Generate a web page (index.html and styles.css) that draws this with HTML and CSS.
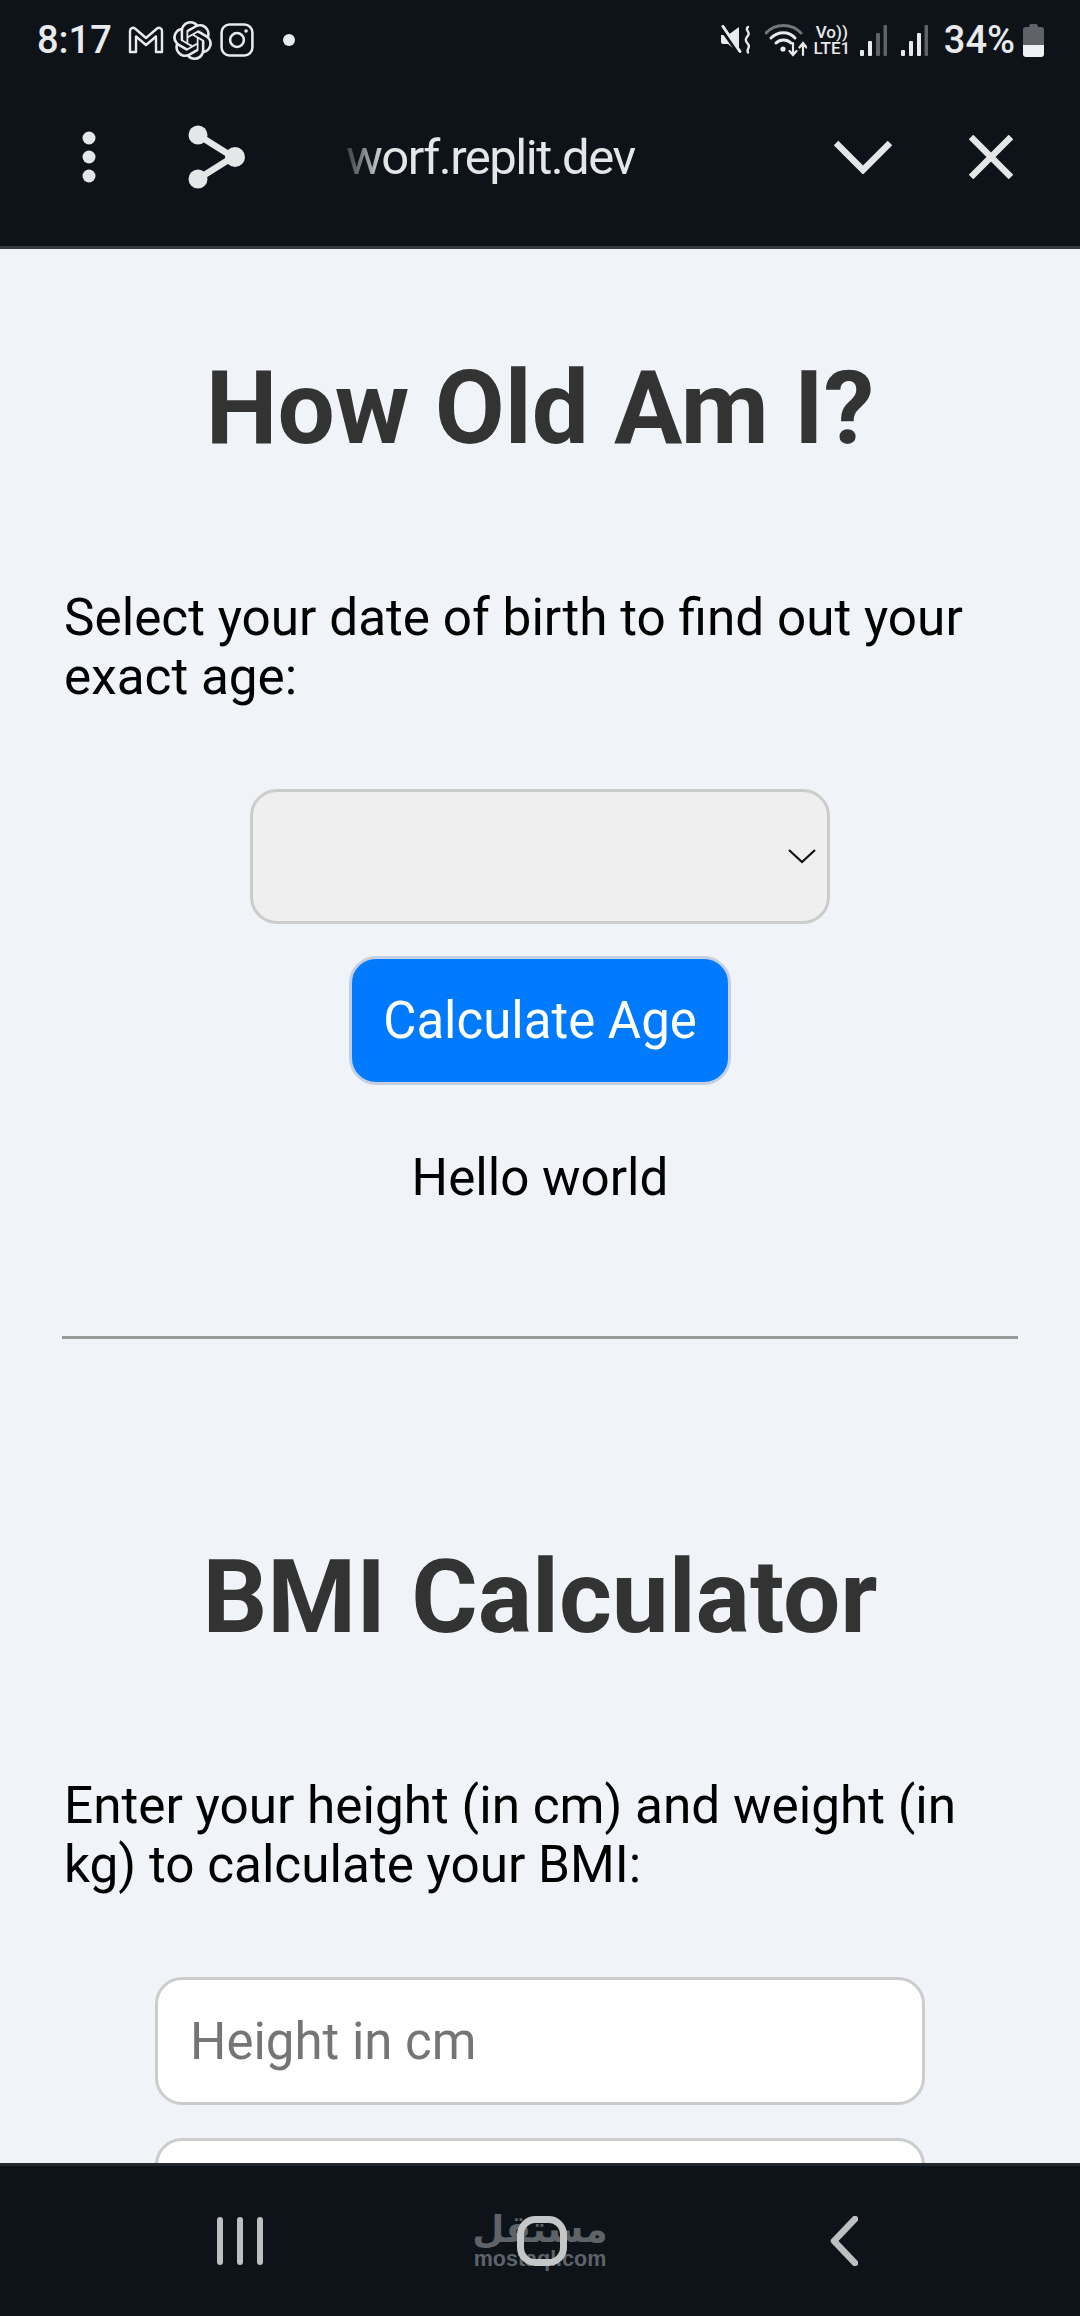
FILE: index.html
```html
<!DOCTYPE html>
<html lang="en">
<head>
    <meta charset="UTF-8">
    <meta name="viewport" content="width=device-width, initial-scale=1.0">
    <title>How Old Am I?</title>
    <link rel="stylesheet" href="styles.css">
</head>
<body>
    <header class="top">
        <div class="status-bar">
            <div class="status-left">
                <span class="clock">8:17</span>
                <svg class="ic-gmail" width="36" height="28" viewBox="0 0 36 28" fill="none" stroke="#e8eaec" stroke-width="2.4" stroke-linejoin="round"><path d="M2 26V5c0-3 3-4 5-2.500L18 12 29 2.500c2-1.500 5-.5 5 2.500v21h-6V10.500L18 19 8 10.500V26z"/></svg>
                <svg class="ic-openai" width="39" height="39" viewBox="0 0 24 24" fill="#e8eaec"><path d="M22.2819 9.8211a5.9847 5.9847 0 0 0-.5157-4.9108 6.0462 6.0462 0 0 0-6.5098-2.9A6.0651 6.0651 0 0 0 4.9807 4.1818a5.9847 5.9847 0 0 0-3.9977 2.9 6.0462 6.0462 0 0 0 .7427 7.0966 5.98 5.98 0 0 0 .511 4.9107 6.051 6.051 0 0 0 6.5146 2.9001A5.9847 5.9847 0 0 0 13.2599 24a6.0557 6.0557 0 0 0 5.7718-4.2058 5.9894 5.9894 0 0 0 3.9977-2.9001 6.0557 6.0557 0 0 0-.7475-7.0729zm-9.022 12.6081a4.4755 4.4755 0 0 1-2.8764-1.0408l.1419-.0804 4.7783-2.7582a.7948.7948 0 0 0 .3927-.6813v-6.7369l2.02 1.1686a.071.071 0 0 1 .038.052v5.5826a4.504 4.504 0 0 1-4.4945 4.4944zm-9.6607-4.1254a4.4708 4.4708 0 0 1-.5346-3.0137l.142.0852 4.783 2.7582a.7712.7712 0 0 0 .7806 0l5.8428-3.3685v2.3324a.0804.0804 0 0 1-.0332.0615L9.74 19.9502a4.4992 4.4992 0 0 1-6.1408-1.6464zM2.3408 7.8956a4.485 4.485 0 0 1 2.3655-1.9728V11.6a.7664.7664 0 0 0 .3879.6765l5.8144 3.3543-2.0201 1.1685a.0757.0757 0 0 1-.071 0l-4.8303-2.7865A4.504 4.504 0 0 1 2.3408 7.872zm16.5963 3.8558L13.1038 8.364 15.1192 7.2a.0757.0757 0 0 1 .071 0l4.8303 2.7913a4.4944 4.4944 0 0 1-.6765 8.1042v-5.6772a.79.79 0 0 0-.407-.667zm2.0107-3.0231l-.142-.0852-4.7735-2.7818a.7759.7759 0 0 0-.7854 0L9.409 9.2297V6.8974a.0662.0662 0 0 1 .0284-.0615l4.8303-2.7866a4.4992 4.4992 0 0 1 6.6802 4.66zM8.3065 12.863l-2.02-1.1638a.0804.0804 0 0 1-.038-.0567V6.0742a4.4992 4.4992 0 0 1 7.3757-3.4537l-.142.0805L8.704 5.459a.7948.7948 0 0 0-.3927.6813zm1.0976-2.3654l2.602-1.4998 2.6069 1.4998v2.9994l-2.5974 1.4997-2.6067-1.4997Z"/></svg>
                <svg class="ic-insta" width="34" height="34" viewBox="0 0 32 32" fill="none" stroke="#e8eaec" stroke-width="2.4"><rect x="1.500" y="1.500" width="29" height="29" rx="7.500"/><circle cx="16" cy="16" r="6.500"/><circle cx="24.500" cy="7.500" r="1.700" fill="#e8eaec" stroke="none"/></svg>
                <span class="notif-dot"></span>
            </div>
            <div class="status-right">
                <svg class="ic-mute" width="30" height="30" viewBox="0 0 30 30" fill="none"><path d="M0 10h7l11-8v26L7 19H2a2 2 0 0 1-2-2z" fill="#e8eaec"/><path d="M1 5l17 24" stroke="#0d1318" stroke-width="3.500"/><path d="M2 1.500l17 25" stroke="#e8eaec" stroke-width="3" stroke-linecap="round"/><path d="M27 2c-4 3 3 5 0 8.500s-3 5 0 8.500-2 5 0 8.500" stroke="#e8eaec" stroke-width="2.400" stroke-linecap="round"/></svg>
                <svg class="ic-wifi" width="42" height="34" viewBox="0 0 42 34" fill="none" stroke-linecap="round"><path d="M1 10C10 0 27 0 36 10" stroke="#73777a" stroke-width="3"/><path d="M6 15c7-7 18-7 24 0" stroke="#e8eaec" stroke-width="3"/><path d="M11 20c4-4 11-4 15 0" stroke="#e8eaec" stroke-width="3"/><circle cx="18" cy="26" r="2.600" fill="#e8eaec"/><path d="M28 20v12m-3.500-4l3.500 4 3.500-4M38 32V21m-3.500 3.500L38 20l3.500 4.500" stroke="#e8eaec" stroke-width="2.200"/></svg>
                <div class="volte"><span>Vo))</span><span>LTE1</span></div>
                <svg class="ic-signal" width="27" height="31" viewBox="0 0 27 31"><rect x="0" y="25" width="4" height="6" rx="1" fill="#e8eaec"/><rect x="8" y="16" width="4" height="15" rx="1" fill="#e8eaec"/><rect x="16" y="8" width="4" height="23" rx="1" fill="#5f6368"/><rect x="23.500" y="0" width="3.500" height="31" rx="1" fill="#5f6368"/></svg>
                <svg class="ic-signal" width="27" height="31" viewBox="0 0 27 31"><rect x="0" y="25" width="4" height="6" rx="1" fill="#e8eaec"/><rect x="8" y="16" width="4" height="15" rx="1" fill="#e8eaec"/><rect x="16" y="8" width="4" height="23" rx="1" fill="#e8eaec"/><rect x="23.500" y="0" width="3.500" height="31" rx="1" fill="#5f6368"/></svg>
                <span class="battery-text">34%</span>
                <svg class="ic-battery" width="21" height="33" viewBox="0 0 21 33"><path d="M6 3c0-2 1-3 2-3h5c1 0 2 1 2 3h3c2 0 3 1 3 3v15H0V6c0-2 1-3 3-3z" fill="#5f6368"/><path d="M0 21h21v9c0 2-1 3-3 3H3c-2 0-3-1-3-3z" fill="#eef0f1"/></svg>
            </div>
        </div>
        <div class="toolbar">
            <div class="toolbar-left">
                <svg class="ic-more" width="14" height="52" viewBox="0 0 14 52" fill="#e4e6e8"><circle cx="7" cy="7" r="6.500"/><circle cx="7" cy="26" r="6.500"/><circle cx="7" cy="45" r="6.500"/></svg>
                <svg class="ic-share" width="58" height="66" viewBox="0 0 58 66" fill="#e4e6e8"><path d="M10 11l35 22L10 55" fill="none" stroke="#e4e6e8" stroke-width="6.500"/><circle cx="10" cy="11" r="9.500"/><circle cx="47" cy="33" r="10"/><circle cx="10" cy="55" r="9.500"/></svg>
                <span class="url">worf.replit.dev</span>
            </div>
            <div class="toolbar-right">
                <svg class="ic-chevron" width="58" height="34" viewBox="0 0 58 34" fill="none" stroke="#e4e6e8" stroke-width="6.500"><path d="M2 3l27 27L56 3"/></svg>
                <svg class="ic-close" width="44" height="44" viewBox="0 0 44 44" fill="none" stroke="#e4e6e8" stroke-width="6.500"><path d="M2 2l40 40M42 2L2 42"/></svg>
            </div>
        </div>
    </header>

    <main class="page">
        <section class="tool">
            <h1>How Old Am I?</h1>
            <p class="intro">Select your date of birth to find out your exact age:</p>
            <div class="date-input">
                <svg width="28" height="15" viewBox="0 0 28 15" fill="none" stroke="#111" stroke-width="2.200"><path d="M1 1l13 12L27 1"/></svg>
            </div>
            <button class="calc-btn">Calculate Age</button>
            <p class="result">Hello world</p>
        </section>
        <hr class="divider">
        <section class="tool bmi">
            <h1>BMI Calculator</h1>
            <p class="intro">Enter your height (in cm) and weight (in kg) to calculate your BMI:</p>
            <input class="num-input" type="text" placeholder="Height in cm">
            <input class="num-input" type="text">
        </section>
    </main>

    <footer class="nav">
        <svg class="ic-recents" width="46" height="48" viewBox="0 0 46 48" fill="#bdbfc0"><rect x="0" y="0" width="6" height="48" rx="3"/><rect x="20" y="0" width="6" height="48" rx="3"/><rect x="40" y="0" width="6" height="48" rx="3"/></svg>
        <svg class="ic-home" width="50" height="50" viewBox="0 0 50 50" fill="none" stroke="#c4c6c7" stroke-width="7"><rect x="3.500" y="3.500" width="43" height="43" rx="15"/></svg>
        <svg class="ic-back" width="28" height="50" viewBox="0 0 28 50" fill="none" stroke="#bdbfc0" stroke-width="6.500" stroke-linecap="round" stroke-linejoin="round"><path d="M25 3L4 25l21 22"/></svg>
        <div class="watermark">
            <span class="wm-ar">مستقل</span>
            <span class="wm-en">mostaql.com</span>
        </div>
    </footer>
</body>
</html>
```

FILE: styles.css
```css
* {
    box-sizing: border-box;
}

body {
    margin: 0;
    width: 1080px;
    height: 2316px;
    overflow: hidden;
    display: flex;
    flex-direction: column;
    font-family: Roboto, Arial, sans-serif;
    background-color: #f0f4f9;
    color: #000;
}

.top {
    height: 249px;
    flex-shrink: 0;
    background-color: #0d1318;
    border-bottom: 3px solid #333a40;
    color: #e8eaec;
}

.status-bar {
    height: 80px;
    display: flex;
    justify-content: space-between;
    align-items: center;
    padding: 0 36px 0 37px;
}

.status-left,
.status-right {
    display: flex;
    align-items: center;
}

.clock {
    font-size: 38px;
    font-weight: 500;
    margin-right: 16px;
}

.ic-openai {
    margin-left: 9px;
}

.ic-insta {
    margin-left: 8px;
}

.notif-dot {
    width: 12px;
    height: 12px;
    margin-left: 29px;
    border-radius: 50%;
    background-color: #e8eaec;
}

.ic-wifi {
    margin-left: 14px;
}

.volte {
    display: flex;
    flex-direction: column;
    align-items: center;
    margin-left: 6px;
    width: 38px;
    font-size: 17px;
    line-height: 16px;
    font-weight: 500;
}

.ic-signal {
    margin-left: 9px;
}

.ic-signal + .ic-signal {
    margin-left: 14px;
}

.battery-text {
    margin-left: 16px;
    font-size: 38px;
    font-weight: 500;
}

.ic-battery {
    margin-left: 8px;
}

.toolbar {
    height: 166px;
    display: flex;
    justify-content: space-between;
    align-items: center;
    padding: 0 67px 12px 82px;
}

.toolbar-left,
.toolbar-right {
    display: flex;
    align-items: center;
}

.ic-share {
    margin-left: 92px;
}

.url {
    margin-left: 100px;
    font-size: 49px;
    letter-spacing: -1.500px;
    color: #e4e6e8;
    -webkit-mask-image: linear-gradient(to right, rgba(0, 0, 0, 0.2), #000 40px);
    mask-image: linear-gradient(to right, rgba(0, 0, 0, 0.2), #000 40px);
}

.ic-close {
    margin-left: 77px;
}

.page {
    flex: 1;
    min-height: 0;
    overflow: hidden;
    padding: 0 62px;
}

.tool {
    display: flex;
    flex-direction: column;
    align-items: center;
}

h1 {
    margin: 100px 0 0;
    font-size: 101.6px;
    line-height: 120px;
    font-weight: 700;
    color: #333;
    text-align: center;
}

.bmi h1 {
    margin-top: 199px;
}

.intro {
    width: 100%;
    margin: 119px 0 0;
    padding-left: 2px;
    font-size: 51.3px;
    line-height: 59px;
}

.bmi .intro {
    margin-top: 118px;
}

.date-input {
    width: 580px;
    height: 135px;
    margin-top: 83px;
    padding-right: 11px;
    display: flex;
    justify-content: flex-end;
    align-items: center;
    background-color: #efefef;
    border: 3px solid #ccc;
    border-radius: 27px;
}

.calc-btn {
    width: 382px;
    height: 129px;
    margin-top: 32px;
    font-family: Roboto, Arial, sans-serif;
    font-size: 51px;
    color: #fff;
    background-color: #007bff;
    border: 3px solid #c5cfe0;
    border-radius: 27px;
}

.result {
    margin: 63px 0 0;
    font-size: 51.2px;
    line-height: 59px;
}

.divider {
    margin: 129px 0 0;
    height: 3px;
    border: none;
    background-color: #999;
}

.num-input {
    display: block;
    flex-shrink: 0;
    width: 770px;
    height: 128px;
    margin-top: 83px;
    padding: 0 32px;
    font-family: Roboto, Arial, sans-serif;
    font-size: 51px;
    background-color: #fff;
    border: 3px solid #ccc;
    border-radius: 27px;
}

.num-input + .num-input {
    margin-top: 33px;
}

.num-input::placeholder {
    color: #757575;
}

.nav {
    position: relative;
    height: 153px;
    flex-shrink: 0;
    display: flex;
    align-items: center;
    background-color: #0d1318;
    border-top: 3px solid #232a2f;
}

.ic-recents {
    margin-left: 217px;
}

.ic-home {
    margin-left: 254px;
    position: relative;
    z-index: 1;
}

.ic-back {
    margin-left: 263px;
}

.watermark {
    position: absolute;
    left: 470px;
    top: 45px;
    width: 140px;
    display: flex;
    flex-direction: column;
    align-items: center;
    color: #5f6367;
    font-family: "Liberation Sans", Arial, sans-serif;
    font-weight: 700;
}

.wm-ar {
    font-family: "DejaVu Sans", sans-serif;
    font-size: 37px;
    line-height: 38px;
}

.wm-en {
    font-size: 21.5px;
    line-height: 20px;
}
```
